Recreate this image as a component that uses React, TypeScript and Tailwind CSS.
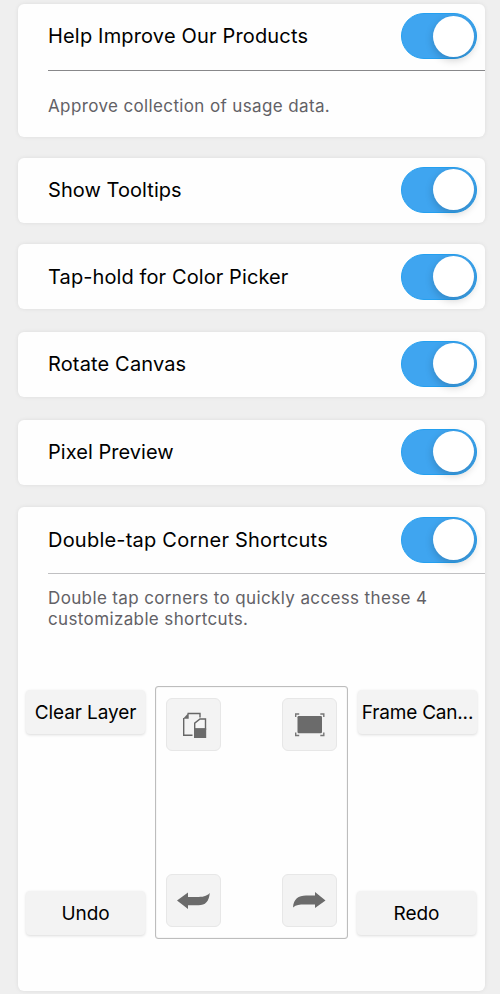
import type { ReactNode } from "react";
import { useState } from "react";

interface ToggleProps {
  label: string;
}

const Toggle = ({ label }: ToggleProps) => {
  const [on, setOn] = useState(true);

  return (
    <button
      type="button"
      role="switch"
      aria-checked={on}
      aria-label={label}
      onClick={() => setOn(!on)}
      className={`flex h-[46px] w-[76px] shrink-0 items-center rounded-full border px-[2px] ${
        on ? "justify-end border-[#24a0f0] bg-[#3fa5f0]" : "justify-start border-gray-300 bg-gray-200"
      }`}
    >
      <span className="size-[41px] rounded-full bg-white shadow-[0_3px_8px_rgba(0,0,0,0.2)]" />
    </button>
  );
};

interface SettingCardProps {
  title: string;
  titleClass: string;
  rowClass?: string;
  className: string;
  children?: ReactNode;
}

const SettingCard = ({ title, titleClass, rowClass = "h-[64px]", className, children }: SettingCardProps) => (
  <section className={`rounded-[6px] bg-[#fefefe] shadow-[0_0_4px_rgba(0,0,0,0.08)] ${className}`}>
    <div className={`flex items-center justify-between pr-[8px] pl-[30px] ${rowClass}`}>
      <h2 className={`text-[20px] leading-6 whitespace-nowrap ${titleClass}`}>{title}</h2>
      <Toggle label={title} />
    </div>
    {children}
  </section>
);

const CornerButton = ({ label, className }: { label: string; className: string }) => (
  <button
    type="button"
    className={`h-[44px] w-[119px] rounded-[4px] bg-[#f3f3f3] text-center text-[19px] whitespace-nowrap shadow-[0_1px_3px_rgba(0,0,0,0.14)] ${className}`}
  >
    {label}
  </button>
);

const IconTile = ({ children }: { children: ReactNode }) => (
  <div className="h-[53px] w-[55px] rounded-[6px] border border-[#e7e7e7] bg-[#f3f3f3]">
    <svg viewBox="1 1 53 51" className="h-full w-full" fill="#6b6b6b">
      {children}
    </svg>
  </div>
);

const App = () => {
  return (
    <main className="flex h-[994px] w-[500px] flex-col overflow-hidden bg-[#efefef] pt-1 pr-[15px] pl-[18px] font-['Inter',sans-serif] text-black">
      <SettingCard title="Help Improve Our Products" titleClass="tracking-[0.17px]" className="h-[133px]">
        <div className="mt-[2px] ml-[30px] border-t border-[#88888a] pt-[23px]">
          <p className="text-[17px] leading-[24px] tracking-[0.37px] text-[#626166]">Approve collection of usage data.</p>
        </div>
      </SettingCard>
      <SettingCard title="Show Tooltips" titleClass="tracking-[0.06px]" className="mt-[21px] h-[65px]" rowClass="h-[63px]" />
      <SettingCard title="Tap-hold for Color Picker" titleClass="tracking-[0.1px]" className="mt-[21px] h-[65px]" rowClass="h-[65px]" />
      <SettingCard title="Rotate Canvas" titleClass="tracking-[0.15px]" className="mt-[23px] h-[65px]" rowClass="h-[63px]" />
      <SettingCard title="Pixel Preview" titleClass="tracking-[0.04px]" className="mt-[23px] h-[65px]" rowClass="h-[63px]" />
      <SettingCard title="Double-tap Corner Shortcuts" titleClass="pt-px tracking-[0.22px]" className="mt-[22px] h-[484px]" rowClass="h-[65px]">
        <div className="mt-px ml-[30px] border-t border-[#c0c0c2] pt-[14px]">
          <p className="text-[17px] leading-[21px] tracking-[0.37px] text-[#626166]">
            Double tap corners to quickly access these 4
            <br />
            customizable shortcuts.
          </p>
        </div>
        <div className="mt-[56px] flex h-[253px] pl-2">
          <div className="flex flex-col justify-between pt-[4px] pb-[4px]">
            <CornerButton label="Clear Layer" className="pt-[3px] tracking-[-0.1px]" />
            <CornerButton label="Undo" className="pt-[3px] tracking-[-0.05px]" />
          </div>
          <div className="mx-[10px] flex w-[193px] flex-col justify-between rounded-[3px] border border-[#bdbdbd] px-[10px] py-[11px] shadow-[inset_0_0_1px_rgba(0,0,0,0.3)]">
            <div className="flex justify-between">
              <IconTile>
                <path d="M21.5 15.5H34V19.5M17.7 20v17.2H26.5" fill="none" stroke="#666" strokeWidth="1.4" />
                <path d="M17 20.7 22.7 14.8v5.9Z" />
                <path d="M28.7 31v-5.8l5.3-4.2h5.5v10Z" fill="#f5f5f5" stroke="#666" strokeWidth="1.4" />
                <path d="M28 30.5h12.2v9.5H28Z" />
              </IconTile>
              <IconTile>
                <rect x="15.5" y="18" width="24.5" height="17.3" rx="1.2" />
                <path d="M13.7 19v-3h3.5M38.3 16h3.5v3M41.8 34.5v3h-3.5M17.2 37.5h-3.5v-3" fill="none" stroke="#777" strokeWidth="1.4" />
              </IconTile>
            </div>
            <div className="flex justify-between">
              <IconTile>
                <path d="M11 26.5 22 18.5v4.5h8.5c6 0 10-.5 13.3-4-.9 8.5-4.3 12.300-11.300 12.300H22V35Z" />
              </IconTile>
              <IconTile>
                <path d="M43.5 26.5 33 18v3.5h-9c-7.5 0-12.5 3.5-13 12 3-2.800 7-3 11-3h11V34Z" />
              </IconTile>
            </div>
          </div>
          <div className="flex flex-col justify-between pt-[4px] pb-[4px]">
            <CornerButton label="Frame Can..." className="pt-[3px] tracking-[-0.2px]" />
            <CornerButton label="Redo" className="-ml-px pt-[3px] tracking-[-0.05px]" />
          </div>
        </div>
      </SettingCard>
    </main>
  );
};

export default App;
